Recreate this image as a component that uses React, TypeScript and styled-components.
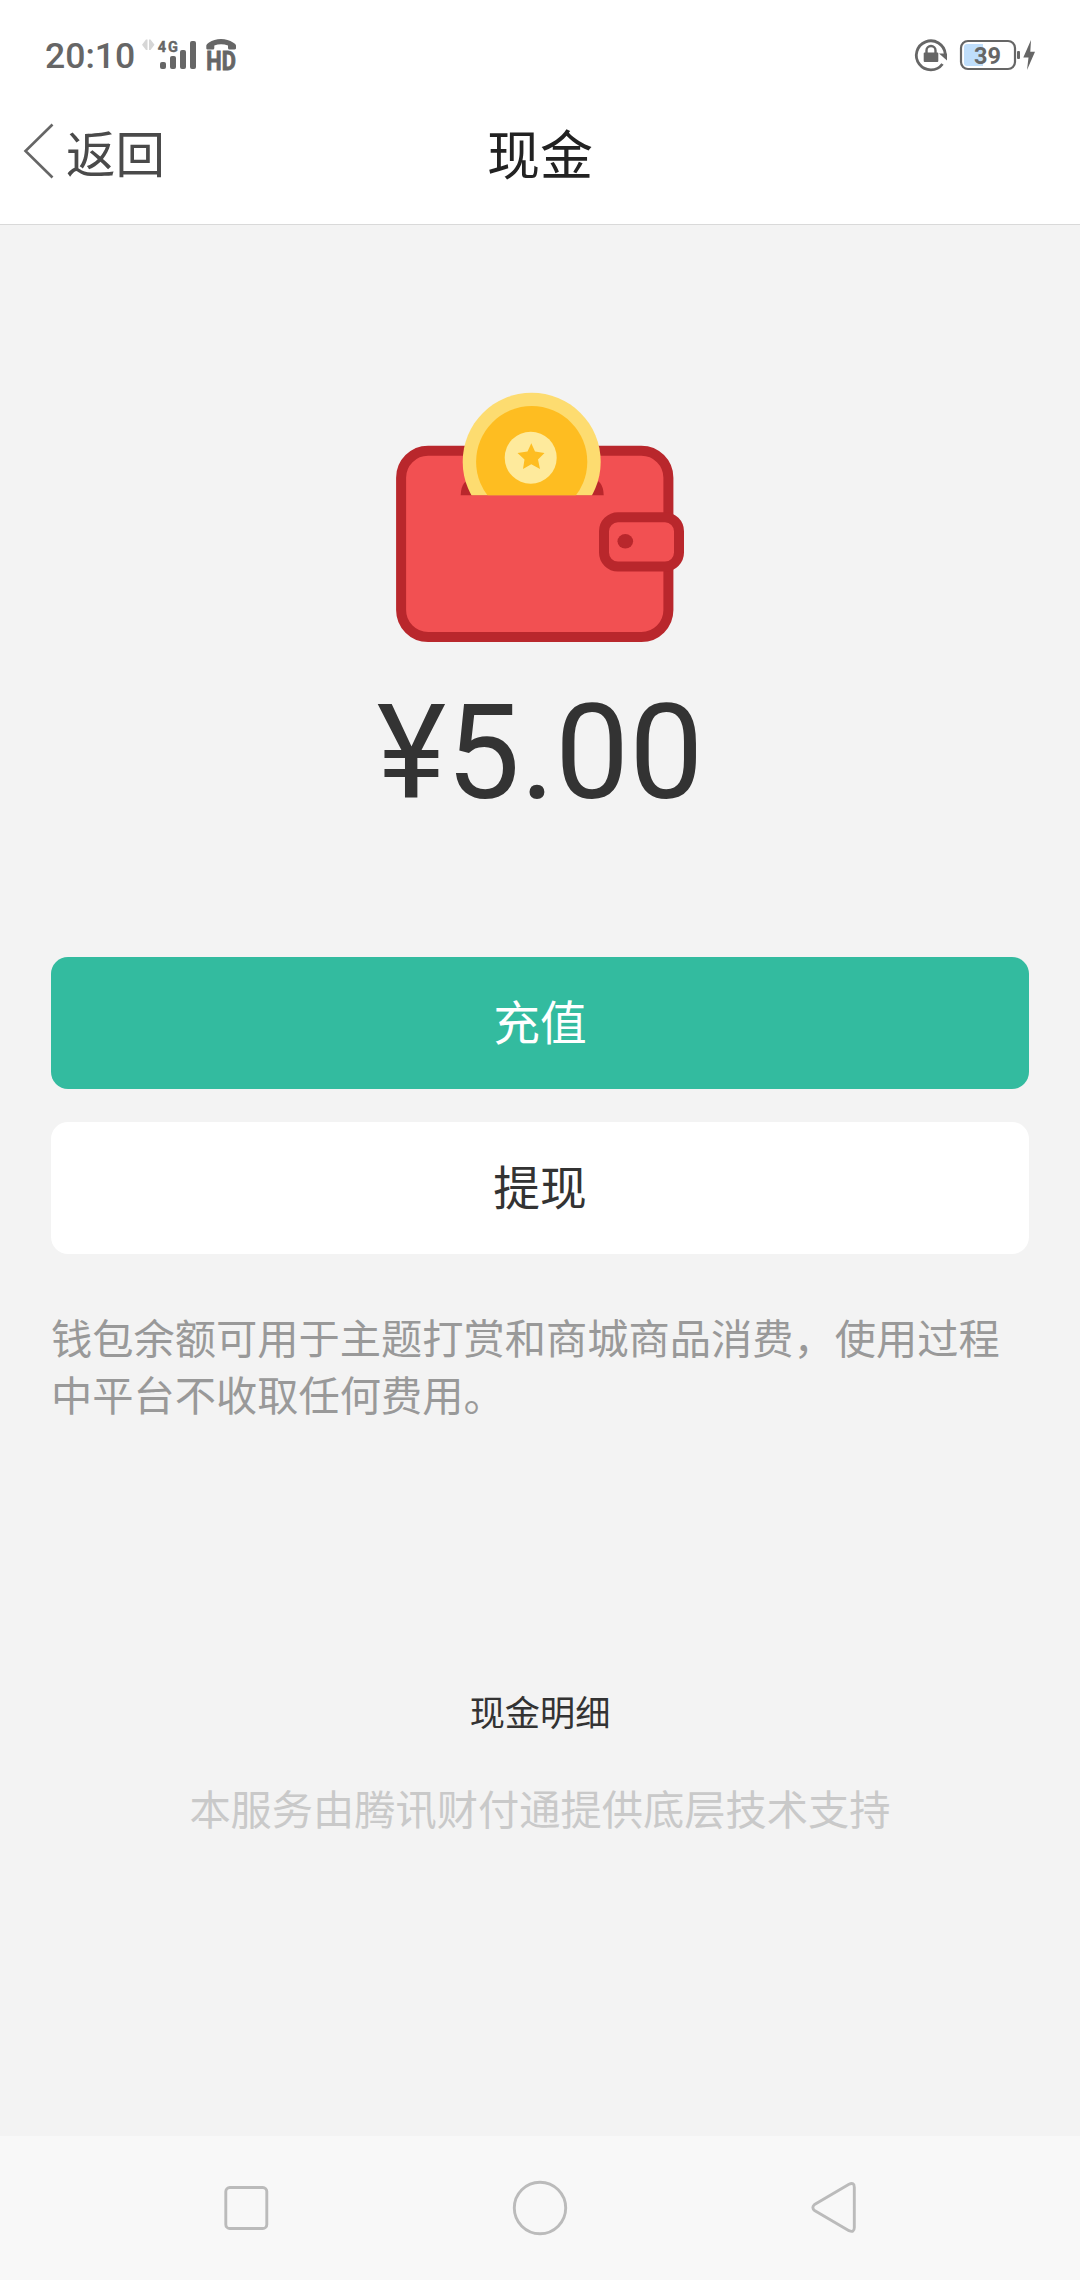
import React from "react";
import styled, { createGlobalStyle } from "styled-components";

const GlobalStyle = createGlobalStyle`
  html, body { margin: 0; padding: 0; background: #f3f3f3; }
  *, *::before, *::after { box-sizing: border-box; }
`;

const Screen = styled.div`
  display: flex;
  flex-direction: column;
  width: 1080px;
  height: 2280px;
  overflow: hidden;
  background: #f3f3f3;
  font-family: "Noto Sans CJK SC", sans-serif;
  color: #333;
`;

const StatusBar = styled.div`
  display: flex;
  align-items: center;
  justify-content: space-between;
  flex: none;
  height: 84px;
  padding: 28px 43px 0 45px;
  background: #fff;
`;

const StatusGroup = styled.div`
  display: flex;
  align-items: center;
  height: 56px;
`;

const Clock = styled.span`
  width: 95px;
  font: 500 35.6px/57px Roboto, sans-serif;
  color: #666;
`;

const Header = styled.header`
  display: grid;
  grid-template-columns: 1fr auto 1fr;
  align-items: center;
  flex: none;
  height: 141px;
  padding: 0 0 6px 22px;
  background: #fff;
  border-bottom: 1px solid #d9d9d9;
`;

const BackButton = styled.button`
  display: flex;
  align-items: center;
  gap: 10px;
  padding: 0;
  border: 0;
  background: none;
  font: 400 49.5px/72px "Noto Sans CJK SC", sans-serif;
  color: #4a4a4a;
`;

const BackLabel = styled.span`
  padding-top: 2px;
`;

const Title = styled.h1`
  margin: 0 22px 0 0;
  padding-top: 2px;
  font-size: 53px;
  line-height: 72px;
  font-weight: 400;
  color: #222;
`;

const Content = styled.main`
  display: flex;
  flex-direction: column;
  flex: 1;
  align-items: center;
  padding: 165px 51px 0;
`;

const Balance = styled.div`
  margin-top: 31px;
  font: 400 132px/156px Roboto, sans-serif;
  color: #333;
`;

const Actions = styled.div`
  display: flex;
  flex-direction: column;
  gap: 33px;
  align-self: stretch;
  margin-top: 126px;
`;

const ActionButton = styled.button<{ $primary?: boolean }>`
  height: 132px;
  padding: 0 0 7px;
  border: 0;
  border-radius: 17px;
  background: ${(p) => (p.$primary ? "#33bb9f" : "#fff")};
  color: ${(p) => (p.$primary ? "#fff" : "#333")};
  font: 400 46.75px/125px "Noto Sans CJK SC", sans-serif;
`;

const Note = styled.p`
  align-self: stretch;
  margin: 54px 0 0;
  font-size: 41.25px;
  line-height: 57px;
  color: #999;
`;

const DetailLink = styled.a`
  margin-top: 262px;
  font-size: 35.2px;
  line-height: 54px;
  color: #333;
`;

const Provider = styled.p`
  margin: 39px 0 0;
  font-size: 41.25px;
  line-height: 60px;
  color: #c9c9c9;
`;

const NavBar = styled.nav`
  display: flex;
  align-items: center;
  justify-content: space-between;
  flex: none;
  height: 144px;
  padding: 0 216px;
  background: #f8f8f8;
`;

const SignalIcons = () => (
  <svg width="100" height="56" viewBox="140 28 100 56" fill="#666">
    <path d="M147.500 39.500V50H146L142 44.700L146 39.500Z M149 39.500V50H150.500L154.500 44.700L150.500 39.500Z" fill="#d6d6d6" />
    <text x="157.800" y="52" fontFamily="Roboto, sans-serif" fontWeight="700" fontSize="14.500" textLength="20" stroke="#666" strokeWidth="0.400">4G</text>
    <rect x="160" y="62" width="6" height="7" rx="2" />
    <rect x="170" y="56" width="6" height="13" rx="2" />
    <rect x="180" y="50" width="6" height="19" rx="2" />
    <rect x="190" y="41" width="6" height="28" rx="2" />
    <path d="M206.300 48.500V45.500Q206.500 44 209 42.500Q214 39 221 39T233 42.500Q236 44 236 45.500V48.500Q235.500 49.500 234.500 49.500H229.500Q228 49.500 228 48V45.500Q221 42.800 214.300 45.500V48Q214.300 49.500 213 49.500H207.500Q206.500 49.500 206.300 48.500Z" />
    <text transform="translate(206.300 69.500) scale(0.870 1)" fontFamily="Roboto, sans-serif" fontWeight="700" fontSize="25" stroke="#666" strokeWidth="0.900">HD</text>
  </svg>
);

const BatteryIcons = () => (
  <svg width="124" height="56" viewBox="913 28 124 56" fill="#666">
    <path d="M942.500 64A14.500 14.500 0 1 1 945.300 54" fill="none" stroke="#666" strokeWidth="2.800" />
    <path d="M939 53.500H947V60.500Z" />
    <rect x="923.700" y="52.500" width="14.600" height="9.500" rx="1" />
    <path d="M926.500 53V50.500A4.500 4.500 0 0 1 935.500 50.500V53" fill="none" stroke="#666" strokeWidth="2.400" />
    <rect x="961" y="41" width="54" height="28" rx="7" fill="#fff" stroke="#666" strokeWidth="2.200" />
    <path d="M967 44H983V66H967Q964 66 964 63V47Q964 44 967 44Z" fill="#bfdefb" />
    <text x="974" y="64" fontFamily="Roboto, sans-serif" fontWeight="700" fontSize="23.500" textLength="27">39</text>
    <rect x="1017" y="51" width="3" height="8" rx="1" />
    <path d="M1031 40L1023.300 57.500H1028.500L1027 70L1035 51.800H1030.300Z" />
  </svg>
);

const BackIcon = () => (
  <svg width="34" height="60" viewBox="22 121 34 60">
    <path d="M52.500 124.500L25.500 151L52.500 177.500" fill="none" stroke="#666" strokeWidth="2.600" />
  </svg>
);

const WalletIcon = () => (
  <svg width="300" height="254" viewBox="390 390 300 254">
    <rect x="401.100" y="450.700" width="267.300" height="186.300" rx="27" fill="#f25052" stroke="#b9272c" strokeWidth="10" />
    <path d="M460.700 495.300Q461 479 474 479H590Q603.500 479 603.700 495.300Z" fill="#b9272c" />
    <clipPath id="slot">
      <rect x="450" y="390" width="160" height="105.300" />
    </clipPath>
    <g clipPath="url(#slot)">
      <circle cx="531.700" cy="461.700" r="69" fill="#fddc70" />
      <circle cx="531.700" cy="461.700" r="55.600" fill="#febd21" />
      <circle cx="530.700" cy="457.700" r="26" fill="#feea9c" />
      <path d="M531.300 443.300L535 451.500L544.500 453L538 459.500L540 469L531.300 464.300L523 469L524.500 459.500L517.500 453L527.500 451.500Z" fill="#febd21" />
    </g>
    <rect x="604" y="517.300" width="75" height="49.300" rx="14" fill="#f25052" stroke="#b9272c" strokeWidth="10" />
    <ellipse cx="625.300" cy="541.300" rx="7.800" ry="7.300" fill="#b9272c" />
  </svg>
);

const NavIcon = styled.svg.attrs({ width: 60, height: 60, viewBox: "0 0 60 60" })`
  fill: none;
  stroke: #bbb;
  stroke-width: 2.9px;
  stroke-linejoin: round;
`;

export default function App() {
  return (
    <Screen>
      <GlobalStyle />
      <StatusBar>
        <StatusGroup>
          <Clock>20:10</Clock>
          <SignalIcons />
        </StatusGroup>
        <StatusGroup>
          <BatteryIcons />
        </StatusGroup>
      </StatusBar>
      <Header>
        <BackButton>
          <BackIcon />
          <BackLabel>返回</BackLabel>
        </BackButton>
        <Title>现金</Title>
      </Header>
      <Content>
        <WalletIcon />
        <Balance>¥5.00</Balance>
        <Actions>
          <ActionButton $primary>充值</ActionButton>
          <ActionButton>提现</ActionButton>
        </Actions>
        <Note>钱包余额可用于主题打赏和商城商品消费，使用过程中平台不收取任何费用。</Note>
        <DetailLink>现金明细</DetailLink>
        <Provider>本服务由腾讯财付通提供底层技术支持</Provider>
      </Content>
      <NavBar>
        <NavIcon>
          <rect x="9.800" y="9.500" width="41" height="41" rx="4" />
        </NavIcon>
        <NavIcon>
          <circle cx="30" cy="30" r="25.700" />
        </NavIcon>
        <NavIcon>
          <path d="M45 6.200L10.500 26.500Q7.200 29.500 10.500 32.500L45 52.700Q50.300 55 50.300 49.500V9.500Q50.300 3.700 45 6.200Z" />
        </NavIcon>
      </NavBar>
    </Screen>
  );
}
